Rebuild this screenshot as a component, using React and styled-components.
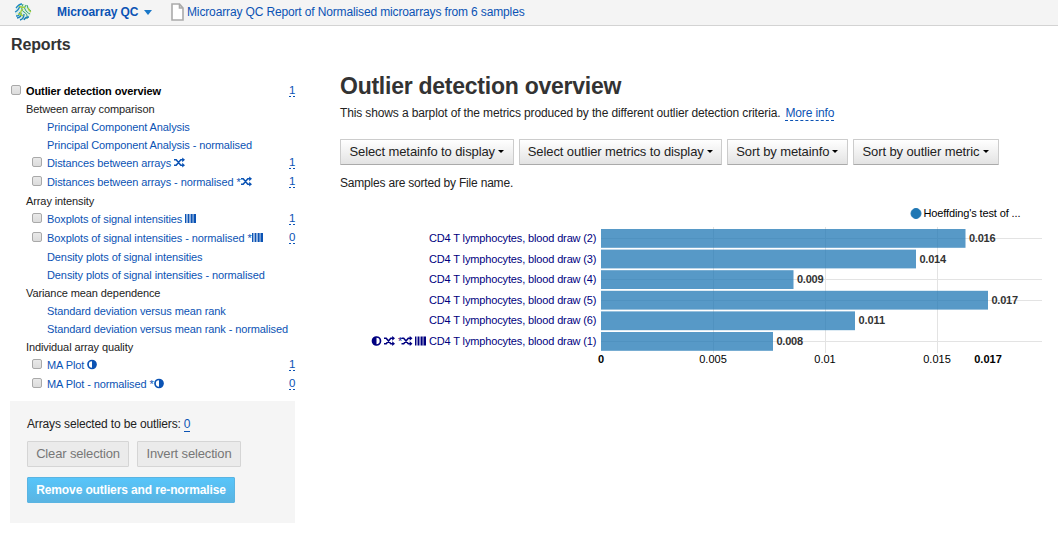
import React from "react";
import styled, { createGlobalStyle, css } from "styled-components";

const Global = createGlobalStyle`
  * { box-sizing: border-box; }
  body { margin: 0; background: #fff; color: #222; font-family: "Liberation Sans", Arial, sans-serif; font-size: 11px; }
`;

const Page = styled.div`
  width: 1058px;
  height: 536px;
  overflow: hidden;
`;
const TopBar = styled.header`
  height: 26px;
  display: flex;
  align-items: center;
  padding: 0 0 1px 14px;
  background: #f4f4f4;
  border-bottom: 1px solid #d3d3d3;
  color: #0b53b4;
  font-size: 12px;
  white-space: nowrap;
`;
const AppMenu = styled.span`
  width: 113px;
  margin-left: 25px;
  display: flex;
  align-items: center;
  font-weight: bold;
`;
const MenuCaret = styled.span`
  margin-left: 6px;
  border: 4.5px solid transparent;
  border-top: 5px solid #1a78c8;
  border-bottom: 0;
`;
const FileLink = styled.span`
  display: flex;
  align-items: center;
  margin-left: 1px;
  gap: 3px;
`;
const Body = styled.div`
  display: flex;
`;
const Sidebar = styled.aside`
  width: 330px;
  padding: 10px 0 0 10px;
`;
const PanelTitle = styled.h2`
  margin: 0 0 29px 1px;
  font-size: 16px;
  line-height: 17px;
  color: #333;
`;
const Label = styled.span`
  display: inline-block;
  letter-spacing: ${(p) => p.$track || 0}px;
`;
const Marks = styled.span`
  display: flex;
  align-items: center;
  margin-left: 3px;
  height: 12px;
`;
const Row = styled.div`
  display: flex;
  align-items: center;
  width: 285px;
  height: ${(p) => (p.$tall ? 19 : 18)}px;
  padding-left: ${(p) => (p.$nested ? 22 : 1)}px;
  white-space: nowrap;
  color: ${(p) => (p.$group ? "#222" : "#0b53b4")};
  ${(p) => p.$bold && css`color: #000; font-weight: bold;`}
  ${(p) => p.$tall && css`
    > ${Label}, > ${Marks} { margin-bottom: 2px; }
  `}
`;
const Check = styled.span`
  width: 10px;
  height: 10px;
  margin: 0 5px 3px 0;
  border-radius: 2px;
  flex: none;
  ${(p) => p.$shown && css`border: 1px solid #a9a9a9; background: linear-gradient(#e9e9e9, #dcdcdc);`}
`;
const Count = styled.a`
  width: 6px;
  height: 12px;
  margin: 0 0 1px auto;
  color: #0b53b4;
  font-size: 11.5px;
  line-height: 11px;
  font-weight: normal;
  background: linear-gradient(90deg, #0b53b4 2px, transparent 2px, transparent 4px, #0b53b4 4px) bottom / 6px 1px no-repeat;
`;
const SelectionBox = styled.section`
  width: 285px;
  height: 122px;
  margin-top: 7px;
  padding: 16px 17px;
  background: #f5f5f5;
`;
const SelectionText = styled.div`
  display: flex;
  gap: 3px;
  height: 14px;
  line-height: 14px;
  margin-bottom: 10px;
  font-size: 12px;
`;
const Buttons = styled.div`
  display: flex;
  gap: ${(p) => p.$gap}px;
`;
const Button = styled.button`
  display: flex;
  align-items: center;
  justify-content: center;
  width: ${(p) => p.$w}px;
  height: 26px;
  padding: 0 0 1px;
  font: 13px "Liberation Sans", Arial, sans-serif;
  white-space: nowrap;
  border-radius: 1px;
  border: 1px solid #ccc;
  border-bottom-color: #aaa;
  background: linear-gradient(#fff, #e3e3e3);
  color: #222;
  ${(p) => p.$muted && css`background: #ebebeb; border-color: #d5d5d5; color: #777;`}
  ${(p) => p.$primary && css`
    margin-top: 10px;
    background: linear-gradient(#57c5fa, #5ab4e2);
    border-color: #5ab4e2;
    color: #fff;
    font-weight: bold;
    font-size: 12px;
  `}
`;
const Caret = styled.span`
  margin-left: 3px;
  border: 3px solid transparent;
  border-top-color: #000;
  border-bottom: 0;
`;
const Main = styled.main`
  width: 728px;
  padding: 47px 0 0 10px;
`;
const Title = styled.h1`
  margin: 0;
  font-size: 23px;
  line-height: 27px;
  color: #333;
  white-space: nowrap;
`;
const Intro = styled.div`
  display: flex;
  gap: 5px;
  height: 16px;
  line-height: 14px;
  margin: 6px 0 17px;
  white-space: nowrap;
  font-size: 12px;
`;
const MoreInfo = styled.a`
  color: #0b53b4;
  height: 15px;
  border-bottom: 1px dashed #0b53b4;
`;
const Note = styled.div`
  margin-top: 11px;
  line-height: 14px;
  font-size: 12px;
`;
const Chart = styled.svg`
  display: block;
  margin-top: 8px;
`;

const shuffle = (
  <g fill="none" stroke="currentColor" strokeWidth="1.6">
    <path d="M0 2.8h2.2L6.8 8.2H9M0 8.2h2.2L6.8 2.8H9" />
    <path d="M8.2.4 11 2.8 8.2 5.2zM8.2 5.8 11 8.2 8.2 10.6z" fill="currentColor" stroke="none" />
  </g>
);
const halfLeft = (
  <g>
    <circle cx="5" cy="5.5" r="4" fill="none" stroke="currentColor" strokeWidth="1.7" />
    <path d="M5 1.3a4.2 4.2 0 0 0 0 8.4z" fill="currentColor" />
  </g>
);
const half = <g transform="matrix(-1 0 0 1 10 0)">{halfLeft}</g>;
const barcode = (
  <g fill="currentColor">
    <path d="M0 1h1v9H0zM3 1h1v9H3zM6 1h1.6v9H6zM8.6 1h2.4v9H8.6z" />
    <path d="M1 1h2v9H1zM4 1h2v9H4zM7.6 1h1v9h-1z" opacity=".45" />
  </g>
);
const glyphs = { shuffle, half, barcode };

const Glyph = ({ kind, star }) => (
  <Marks>
    {star && <Label>*</Label>}
    <svg width="12" height="11" viewBox="0 0 12 11">{glyphs[kind]}</svg>
  </Marks>
);

const reports = [
  { text: "Outlier detection overview", check: true, bold: true, count: 1 },
  { text: "Between array comparison", group: true },
  { text: "Principal Component Analysis" },
  { text: "Principal Component Analysis - normalised" },
  { text: "Distances between arrays", check: true, icon: "shuffle", count: 1 },
  { text: "Distances between arrays - normalised", check: true, icon: "shuffle", star: true, count: 1 },
  { text: "Array intensity", group: true },
  { text: "Boxplots of signal intensities", check: true, icon: "barcode", count: 1 },
  { text: "Boxplots of signal intensities - normalised", check: true, icon: "barcode", star: true, count: 0 },
  { text: "Density plots of signal intensities" },
  { text: "Density plots of signal intensities - normalised" },
  { text: "Variance mean dependence", group: true },
  { text: "Standard deviation versus mean rank" },
  { text: "Standard deviation versus mean rank - normalised" },
  { text: "Individual array quality", group: true },
  { text: "MA Plot", check: true, icon: "half", count: 1 },
  { text: "MA Plot - normalised", check: true, icon: "half", star: true, count: 0 },
];

const samples = [
  [2, 364.5, "0.016", true],
  [3, 315, "0.014", false],
  [4, 192.5, "0.009", true],
  [5, 387, "0.017", true],
  [6, 254, "0.011", false],
  [1, 172, "0.008", true],
];

const OutlierChart = () => (
  <Chart width="718" height="180" viewBox="340 198 718 180" fontSize="11">
    <g stroke="#e3e3e3">
      {[713.5, 825.5, 937.5].map((x) => <path key={x} d={`M${x} 227V353`} />)}
      {samples.map(([n, , , line], i) => line && <path key={n} d={`M601 ${Math.round(238 + i * 20.6) + 0.5}H1042`} />)}
    </g>
    <circle cx="916" cy="213.5" r="5" fill="#1f77b4" stroke="#1f77b4" />
    <text x="923.5" y="217" textLength="97">Hoeffding's test of ...</text>
    {samples.map(([n, w, value], i) => {
      const y = 229 + i * 20.6;
      return (
        <g key={n}>
          <rect x="601" y={y} width={w} height="18.8" fill="#1f77b4" fillOpacity=".75" />
          <text x="429" y={y + 13} fill="#000080" textLength="167.5">{`CD4 T lymphocytes, blood draw (${n})`}</text>
          <text x={604.5 + w} y={y + 13} fill="#333" fontWeight="bold" textLength="26.5">{value}</text>
        </g>
      );
    })}
    <g color="#000080">
      <g transform="translate(371.5 335.5)">{halfLeft}</g>
      <g transform="translate(384 335.5)">{shuffle}</g>
      <text x="398" y="345" fill="#000080">*</text>
      <g transform="translate(401.5 335.5)">{shuffle}</g>
      <g transform="translate(415 335.5)">{barcode}</g>
    </g>
    <g textAnchor="middle">
      <text x="601" y="363" fontWeight="bold">0</text>
      <text x="713" y="363">0.005</text>
      <text x="825" y="363">0.01</text>
      <text x="937" y="363">0.015</text>
      <text x="988" y="363" fontWeight="bold">0.017</text>
    </g>
  </Chart>
);

const Logo = () => (
  <svg width="18" height="18" viewBox="0 0 18 18" fill="none" strokeWidth="1.3">
    <circle cx="9" cy="9" r="8" fill="#d9eee6" />
    <path d="M2 5q3-4 6-4M1 9q3-1 5-6M2 13q4 0 4-4" stroke="#1b86c4" />
    <path d="M9 1Q6 7 10 9t3 7M12 2q-3 3 0 6t4 3M13 2q0 4 4 6" stroke="#3aa36f" strokeWidth="1" />
    <path d="M3 15q5-1 4-5M6 17q4-1 4-6M10 17q1-3 5-3" stroke="#1c7fb9" />
    <path d="M9 6q-3 2-2 5M14 5q1 3 3 4M5 3q2 2 6 1M4 11q3 0 5 2" stroke="#a9cf38" />
  </svg>
);

export default function App() {
  return (
    <Page>
      <Global />
      <TopBar>
        <Logo />
        <AppMenu><Label $track={-0.1}>Microarray QC</Label><MenuCaret /></AppMenu>
        <FileLink>
          <svg width="13" height="18" viewBox="0 0 13 18" fill="#fff" stroke="#aaa" strokeWidth="1.6"><path d="M1 1h7.5l3.5 4v12H1zM8.5 1v4H12" /></svg>
          <Label $track={-0.14}>Microarray QC Report of Normalised microarrays from 6 samples</Label>
        </FileLink>
      </TopBar>
      <Body>
        <Sidebar>
          <PanelTitle><Label $track={-0.15}>Reports</Label></PanelTitle>
          {reports.map((r) => (
            <Row key={r.text} $tall={r.check && !r.bold} $nested={!r.bold && !r.group} $group={r.group} $bold={r.bold}>
              <Check $shown={r.check} />
              <Label $track={-0.1}>{r.text}</Label>
              {r.icon && <Glyph kind={r.icon} star={r.star} />}
              {r.count !== undefined && <Count>{r.count}</Count>}
            </Row>
          ))}
          <SelectionBox>
            <SelectionText><Label $track={-0.14}>Arrays selected to be outliers:</Label><MoreInfo>0</MoreInfo></SelectionText>
            <Buttons $gap={8}>
              <Button $w={102} $muted><Label $track={-0.15}>Clear selection</Label></Button>
              <Button $w={104} $muted><Label $track={-0.15}>Invert selection</Label></Button>
            </Buttons>
            <Button $w={208} $primary><Label $track={-0.12}>Remove outliers and re-normalise</Label></Button>
          </SelectionBox>
        </Sidebar>
        <Main>
          <Title><Label $track={-0.25}>Outlier detection overview</Label></Title>
          <Intro>
            <Label $track={-0.13}>This shows a barplot of the metrics produced by the different outlier detection criteria.</Label>
            <MoreInfo><Label $track={-0.13}>More info</Label></MoreInfo>
          </Intro>
          <Buttons $gap={5}>
            <Button $w={173.5}><Label $track={-0.1}>Select metainfo to display</Label><Caret /></Button>
            <Button $w={203.5}><Label $track={-0.1}>Select outlier metrics to display</Label><Caret /></Button>
            <Button $w={120.5}><Label $track={-0.1}>Sort by metainfo</Label><Caret /></Button>
            <Button $w={146}><Label $track={-0.1}>Sort by outlier metric</Label><Caret /></Button>
          </Buttons>
          <Note><Label $track={-0.2}>Samples are sorted by File name.</Label></Note>
          <OutlierChart />
        </Main>
      </Body>
    </Page>
  );
}
